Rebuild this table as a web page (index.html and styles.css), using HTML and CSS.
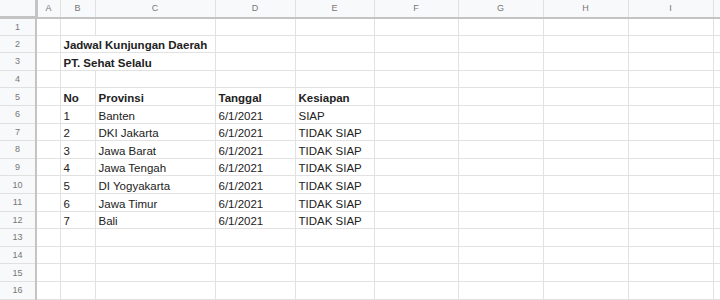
FILE: index.html
```html
<!DOCTYPE html>
<html lang="id">
<head>
  <meta charset="UTF-8" />
  <title>Jadwal Kunjungan Daerah</title>
  <link rel="stylesheet" href="styles.css">
</head>
<body>
  <table class="sheet">
    <colgroup>
      <col class="c-row"><col class="c-a"><col class="c-b"><col class="c-c"><col class="c-d"><col class="c-e">
      <col class="c-f"><col class="c-g"><col class="c-h"><col class="c-i"><col class="c-j">
    </colgroup>
    <thead>
      <tr>
        <th class="corner"></th>
        <th>A</th><th>B</th><th>C</th><th>D</th><th>E</th><th>F</th><th>G</th><th>H</th><th>I</th><th></th>
      </tr>
    </thead>
    <tbody>
      <tr><th>1</th><td></td><td></td><td></td><td></td><td></td><td></td><td></td><td></td><td></td><td></td></tr>
      <tr><th>2</th><td></td><td class="b" colspan="2">Jadwal Kunjungan Daerah</td><td></td><td></td><td></td><td></td><td></td><td></td><td></td></tr>
      <tr><th>3</th><td></td><td class="b" colspan="2">PT. Sehat Selalu</td><td></td><td></td><td></td><td></td><td></td><td></td><td></td></tr>
      <tr><th>4</th><td></td><td></td><td></td><td></td><td></td><td></td><td></td><td></td><td></td><td></td></tr>
      <tr><th>5</th><td></td><td class="b">No</td><td class="b">Provinsi</td><td class="b">Tanggal</td><td class="b">Kesiapan</td><td></td><td></td><td></td><td></td><td></td></tr>
      <tr><th>6</th><td></td><td>1</td><td>Banten</td><td>6/1/2021</td><td>SIAP</td><td></td><td></td><td></td><td></td><td></td></tr>
      <tr><th>7</th><td></td><td>2</td><td>DKI Jakarta</td><td>6/1/2021</td><td>TIDAK SIAP</td><td></td><td></td><td></td><td></td><td></td></tr>
      <tr><th>8</th><td></td><td>3</td><td>Jawa Barat</td><td>6/1/2021</td><td>TIDAK SIAP</td><td></td><td></td><td></td><td></td><td></td></tr>
      <tr><th>9</th><td></td><td>4</td><td>Jawa Tengah</td><td>6/1/2021</td><td>TIDAK SIAP</td><td></td><td></td><td></td><td></td><td></td></tr>
      <tr><th>10</th><td></td><td>5</td><td>DI Yogyakarta</td><td>6/1/2021</td><td>TIDAK SIAP</td><td></td><td></td><td></td><td></td><td></td></tr>
      <tr><th>11</th><td></td><td>6</td><td>Jawa Timur</td><td>6/1/2021</td><td>TIDAK SIAP</td><td></td><td></td><td></td><td></td><td></td></tr>
      <tr><th>12</th><td></td><td>7</td><td>Bali</td><td>6/1/2021</td><td>TIDAK SIAP</td><td></td><td></td><td></td><td></td><td></td></tr>
      <tr><th>13</th><td></td><td></td><td></td><td></td><td></td><td></td><td></td><td></td><td></td><td></td></tr>
      <tr><th>14</th><td></td><td></td><td></td><td></td><td></td><td></td><td></td><td></td><td></td><td></td></tr>
      <tr><th>15</th><td></td><td></td><td></td><td></td><td></td><td></td><td></td><td></td><td></td><td></td></tr>
      <tr><th>16</th><td></td><td></td><td></td><td></td><td></td><td></td><td></td><td></td><td></td><td></td></tr>
    </tbody>
  </table>
</body>
</html>
```

FILE: styles.css
```css
body {
  margin: 0;
  background: #fff;
  overflow: hidden;
  font-family: "Liberation Sans", Arial, sans-serif;
}

.sheet {
  border-collapse: collapse;
  table-layout: fixed;
  width: 720px;
}

.c-row { width: 36px; }
.c-a { width: 24px; }
.c-b { width: 35px; }
.c-c { width: 120px; }
.c-d { width: 80px; }
.c-e { width: 79px; }
.c-f { width: 84px; }
.c-g { width: 85px; }
.c-h { width: 85px; }
.c-i { width: 85px; }
.c-j { width: 7px; }

/* column letters */
thead th {
  height: 16px;
  padding: 0;
  background: #f8f9fa;
  color: #777;
  font-size: 9px;
  font-weight: normal;
  border-right: 1px solid #e0e0e0;
  border-bottom: 2px solid #c4c4c4;
  text-align: center;
}

thead th.corner {
  border-right: 3px solid #c4c4c4;
  border-bottom: 3px solid #c4c4c4;
}

tbody tr {
  height: 17.6px;
}

/* row numbers */
tbody th {
  padding: 0;
  background: #f8f9fa;
  color: #777;
  font-size: 9px;
  font-weight: normal;
  text-align: center;
  border-right: 2px solid #c4c4c4;
  border-bottom: 1px solid #e0e0e0;
}

td {
  padding: 0 3px 1px;
  font-size: 11.5px;
  color: #222;
  border-right: 1px solid #e2e2e2;
  border-bottom: 1px solid #e2e2e2;
  vertical-align: bottom;
  white-space: nowrap;
  overflow: hidden;
}

td.b {
  font-weight: bold;
}
```
